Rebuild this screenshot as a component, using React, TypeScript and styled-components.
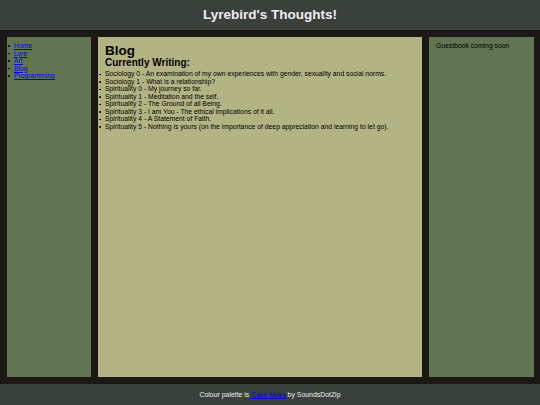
import React from "react"
import styled, { createGlobalStyle } from "styled-components"

const colors = {
  slate: "#3a403c",
  night: "#1b1815",
  moss: "#617552",
  sand: "#b3b484",
  text: "#000000",
  light: "#eeeeee",
  link: "#0000ee",
}

const GlobalStyle = createGlobalStyle`
  html, body {
    margin: 0;
    padding: 0;
    background: ${colors.night};
    font-family: "Liberation Sans", Arial, sans-serif;
  }
`

const Page = styled.div`
  display: flex;
  flex-direction: column;
  height: 405px;
  width: 540px;
`

const Header = styled.header`
  align-items: center;
  background: ${colors.slate};
  color: ${colors.light};
  display: flex;
  flex: 0 0 30px;
  justify-content: center;

  h1 {
    font-size: 13.5px;
    font-weight: bold;
    margin: 0 0 2px;
  }
`

const Main = styled.main`
  display: flex;
  flex: 1;
  gap: 7px;
  padding: 7px;
`

interface PanelProps {
  tone: "moss" | "sand"
  width: number
}

const Panel = styled.section<PanelProps>`
  background: ${(props): string => colors[props.tone]};
  box-sizing: border-box;
  color: ${colors.text};
  flex: 0 0 ${(props): number => props.width}px;
  font-size: 6.8px;
  line-height: 7.5px;
  padding: 5px 7px;
`

const List = styled.ul`
  list-style: none;
  margin: 0;
  padding: 0;

  li {
    position: relative;
  }

  li::before {
    background: ${colors.text};
    border-radius: 1px;
    content: "";
    height: 1.5px;
    left: -6.5px;
    position: absolute;
    top: 3.4px;
    width: 2.5px;
  }

  a {
    color: ${colors.link};
  }
`

const Title = styled.h2`
  font-size: 13.5px;
  line-height: 15px;
  margin: 0.5px 0 0;
`

const SubTitle = styled.h3`
  font-size: 10px;
  line-height: 10.7px;
  margin: 0 0 2px;
`

const Note = styled.p`
  margin: 0;
`

const Footer = styled.footer`
  align-items: center;
  background: ${colors.slate};
  color: ${colors.light};
  display: flex;
  flex: 0 0 21px;
  font-size: 6.9px;
  justify-content: center;

  a {
    color: ${colors.link};
  }
`

const navItems = ["Home", "Lyre", "Art", "Blog", "Programming"]

const writings = [
  "Sociology 0 - An examination of my own experiences with gender, sexuality and social norms.",
  "Sociology 1 - What is a relationship?",
  "Spirituality 0 - My journey so far.",
  "Spirituality 1 - Meditation and the self.",
  "Spirituality 2 - The Ground of all Being.",
  "Spirituality 3 - I am You - The ethical implications of it all.",
  "Spirituality 4 - A Statement of Faith.",
  "Spirituality 5 - Nothing is yours (on the importance of deep appreciation and learning to let go).",
]

export default function App(): React.ReactElement {
  return (
    <Page>
      <GlobalStyle />
      <Header>
        <h1>Lyrebird's Thoughts!</h1>
      </Header>
      <Main>
        <Panel tone="moss" width={84}>
          <List>
            {navItems.map(item => (
              <li key={item}>
                <a href="#">{item}</a>
              </li>
            ))}
          </List>
        </Panel>
        <Panel tone="sand" width={324}>
          <Title>Blog</Title>
          <SubTitle>Currently Writing:</SubTitle>
          <List>
            {writings.map(item => (
              <li key={item}>{item}</li>
            ))}
          </List>
        </Panel>
        <Panel tone="moss" width={105}>
          <Note>Guestbook coming soon</Note>
        </Panel>
      </Main>
      <Footer>
        <span>
          Colour palette is <a href="#">Cave Moss</a> by SoundsDotZip
        </span>
      </Footer>
    </Page>
  )
}
